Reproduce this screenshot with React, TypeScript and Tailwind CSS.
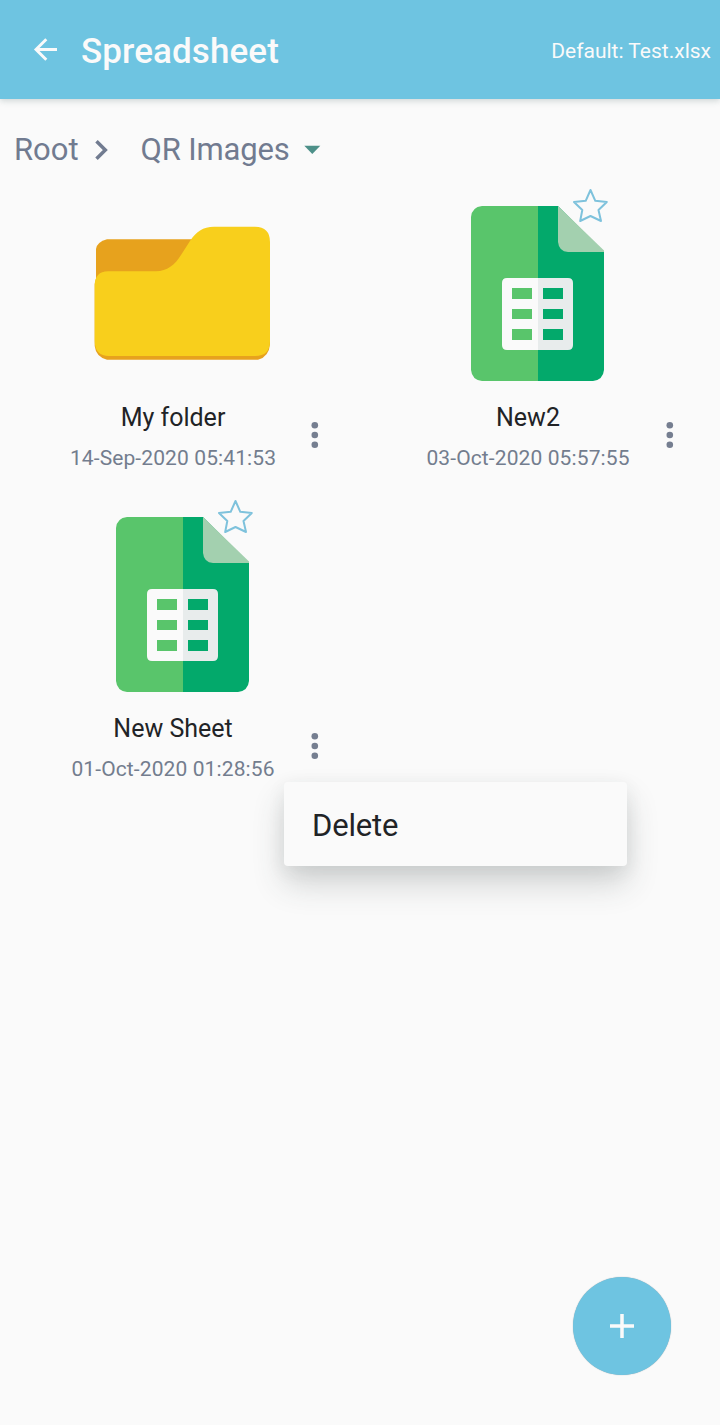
import React from 'react';

type Item = { name: string; date: string; kind: 'folder' | 'sheet' };

const items: Item[] = [
  { name: 'My folder', date: '14-Sep-2020 05:41:53', kind: 'folder' },
  { name: 'New2', date: '03-Oct-2020 05:57:55', kind: 'sheet' },
  { name: 'New Sheet', date: '01-Oct-2020 01:28:56', kind: 'sheet' },
];

function FolderIcon() {
  return (
    <svg className="block h-44 w-44" viewBox="0 0 176 176" aria-hidden="true">
      <path d="M2 43Q3 36 13 33.3H110V120H2Z" fill="#e7a21d" />
      <path d="M.7 78Q2 67 12 65H150Q176 65 176 90V138Q175 151 164 153.700H13Q2 151 .7 140Z" fill="#e7a21d" />
      <path d="M.7 80Q.7 65.3 14 65.3H62C73 65 81 59 87 49L96 35C102 26 109 20.800 120 20.800H161Q176 21 176 36V135C176 145 171 150 161 150H15C6 150 .7 145 .7 135Z" fill="#f8cf1c" />
    </svg>
  );
}

function SheetIcon() {
  return (
    <svg className="block h-44 w-44" viewBox="0 0 176 176" aria-hidden="true">
      <path d="M32 0H88V175H32Q22 174 21 164V11Q22 1 32 0Z" fill="#59c56b" />
      <path d="M88 0H108L154 46V164Q153 174 143 175H88Z" fill="#03a96b" />
      <path d="M108 0L154 44.500V46H118Q109 45.500 108 36Z" fill="#a3d0af" />
      <path d="M88 72H57Q52 72 52 77V139Q52 144 57 144H88Z" fill="#fafafa" />
      <path d="M88 72H118Q123 72 123 77V139Q123 144 118 144H88Z" fill="#e8ecec" />
      <path d="M62 82H82V93H62ZM62 103H82V113H62ZM62 123H82V134H62Z" fill="#59c56b" />
      <path d="M93 82H113V93H93ZM93 103H113V113H93ZM93 123H113V134H93Z" fill="#03a96b" />
    </svg>
  );
}

function Star() {
  return (
    <svg className="absolute top-[6px] left-[216px] h-[38px] w-[40px]" viewBox="0 0 40 38" fill="none" stroke="#7ec2dc" strokeWidth="2" strokeLinejoin="round" aria-hidden="true">
      <path d="M19.500 4L24.300 14.800L35.800 16L27.500 24L30 35L19.500 30L9.200 35L11.300 24L3 16L14.700 14.800Z" />
    </svg>
  );
}

function Card({ item }: { item: Item }) {
  return (
    <div className="relative h-[311px] pt-[26px]">
      {item.kind === 'folder' ? (
        <div className="ml-[94px]">
          <FolderIcon />
        </div>
      ) : (
        <div className="ml-[95px]">
          <SheetIcon />
        </div>
      )}
      {item.kind === 'sheet' && <Star />}
      <div className="mt-[18px] flex">
        <div className="ml-[43px] w-[260px] text-center">
          <div className="text-[25px] leading-[36px] text-[#212326]">{item.name}</div>
          <div className="mt-[7px] text-[21px] leading-[30px] tracking-[0.110px] whitespace-nowrap text-[#737d8e]">{item.date}</div>
        </div>
        <button className="ml-[6px] mt-[20px] h-[30px] w-3" aria-label="More">
          <svg className="block" width="12" height="30" viewBox="0 0 12 30" fill="#757e90">
            <circle cx="5.800" cy="5.300" r="3.300" />
            <circle cx="5.800" cy="15" r="3.300" />
            <circle cx="5.800" cy="24.700" r="3.300" />
          </svg>
        </button>
      </div>
    </div>
  );
}

export default function App() {
  return (
    <div className="relative flex h-[1425px] w-[720px] flex-col overflow-hidden bg-[#fafafa] font-['Roboto',sans-serif]">
      <header className="flex h-[99px] shrink-0 items-center bg-[#6ec4e1] pr-[9px] text-[#fafafa] shadow-[0_2px_6px_rgba(60,90,90,0.22)]">
        <svg className="ml-[33px] h-6 w-[26px] shrink-0" viewBox="0 0 26 24" fill="none" stroke="currentColor" strokeWidth="2.900" aria-hidden="true">
          <path d="M24 11.500H3M13.300 1.200L3 11.500L13.300 21.800" />
        </svg>
        <h1 className="mt-[5px] ml-[22px] text-[35px] leading-[44px] font-medium tracking-[0.100px]">Spreadsheet</h1>
        <span className="mt-[3px] ml-auto text-[21px] leading-[28px] whitespace-nowrap">Default: Test.xlsx</span>
      </header>
      <nav className="flex h-[81px] shrink-0 items-center pl-[14px] text-[31px] leading-[40px] whitespace-nowrap text-[#717b90]">
        <span className="mt-[21px]">Root</span>
        <svg className="mt-[20px] ml-[15px]" width="16" height="22" viewBox="0 0 16 22" fill="none" stroke="currentColor" strokeWidth="3.500" aria-hidden="true">
          <path d="M2.500 2.300L11.300 11L2.500 19.700" />
        </svg>
        <span className="mt-[21px] ml-[31px] tracking-[-0.160px]">QR Images</span>
        <svg className="mt-[21px] ml-[14px]" width="17" height="10" viewBox="0 0 17 10" fill="#4d9089" aria-hidden="true">
          <path d="M.3 .8H16.300L8.300 9Z" />
        </svg>
      </nav>
      <main className="grid w-[710px] grid-cols-2">
        {items.map((item) => (
          <Card key={item.name} item={item} />
        ))}
      </main>
      <div className="absolute top-[782px] left-[284px] flex h-[84px] w-[343px] items-center rounded-[4px] bg-[#fafafa] pt-[4px] pl-[28px] text-[31px] tracking-[-0.200px] text-[#212326] shadow-[0_18px_32px_rgba(50,60,60,0.2),0_5px_18px_rgba(50,60,60,0.08)]">
        Delete
      </div>
      <button className="absolute top-[1277px] left-[573px] flex h-[98px] w-[98px] items-center justify-center rounded-full bg-[#6ec4e1] shadow-[0_0_1px_#8b9da5]" aria-label="Add">
        <svg width="26" height="26" viewBox="0 0 26 26" fill="none" stroke="#fafafa" strokeWidth="3.500" aria-hidden="true">
          <path d="M13 1V25M1 13H25" />
        </svg>
      </button>
    </div>
  );
}
